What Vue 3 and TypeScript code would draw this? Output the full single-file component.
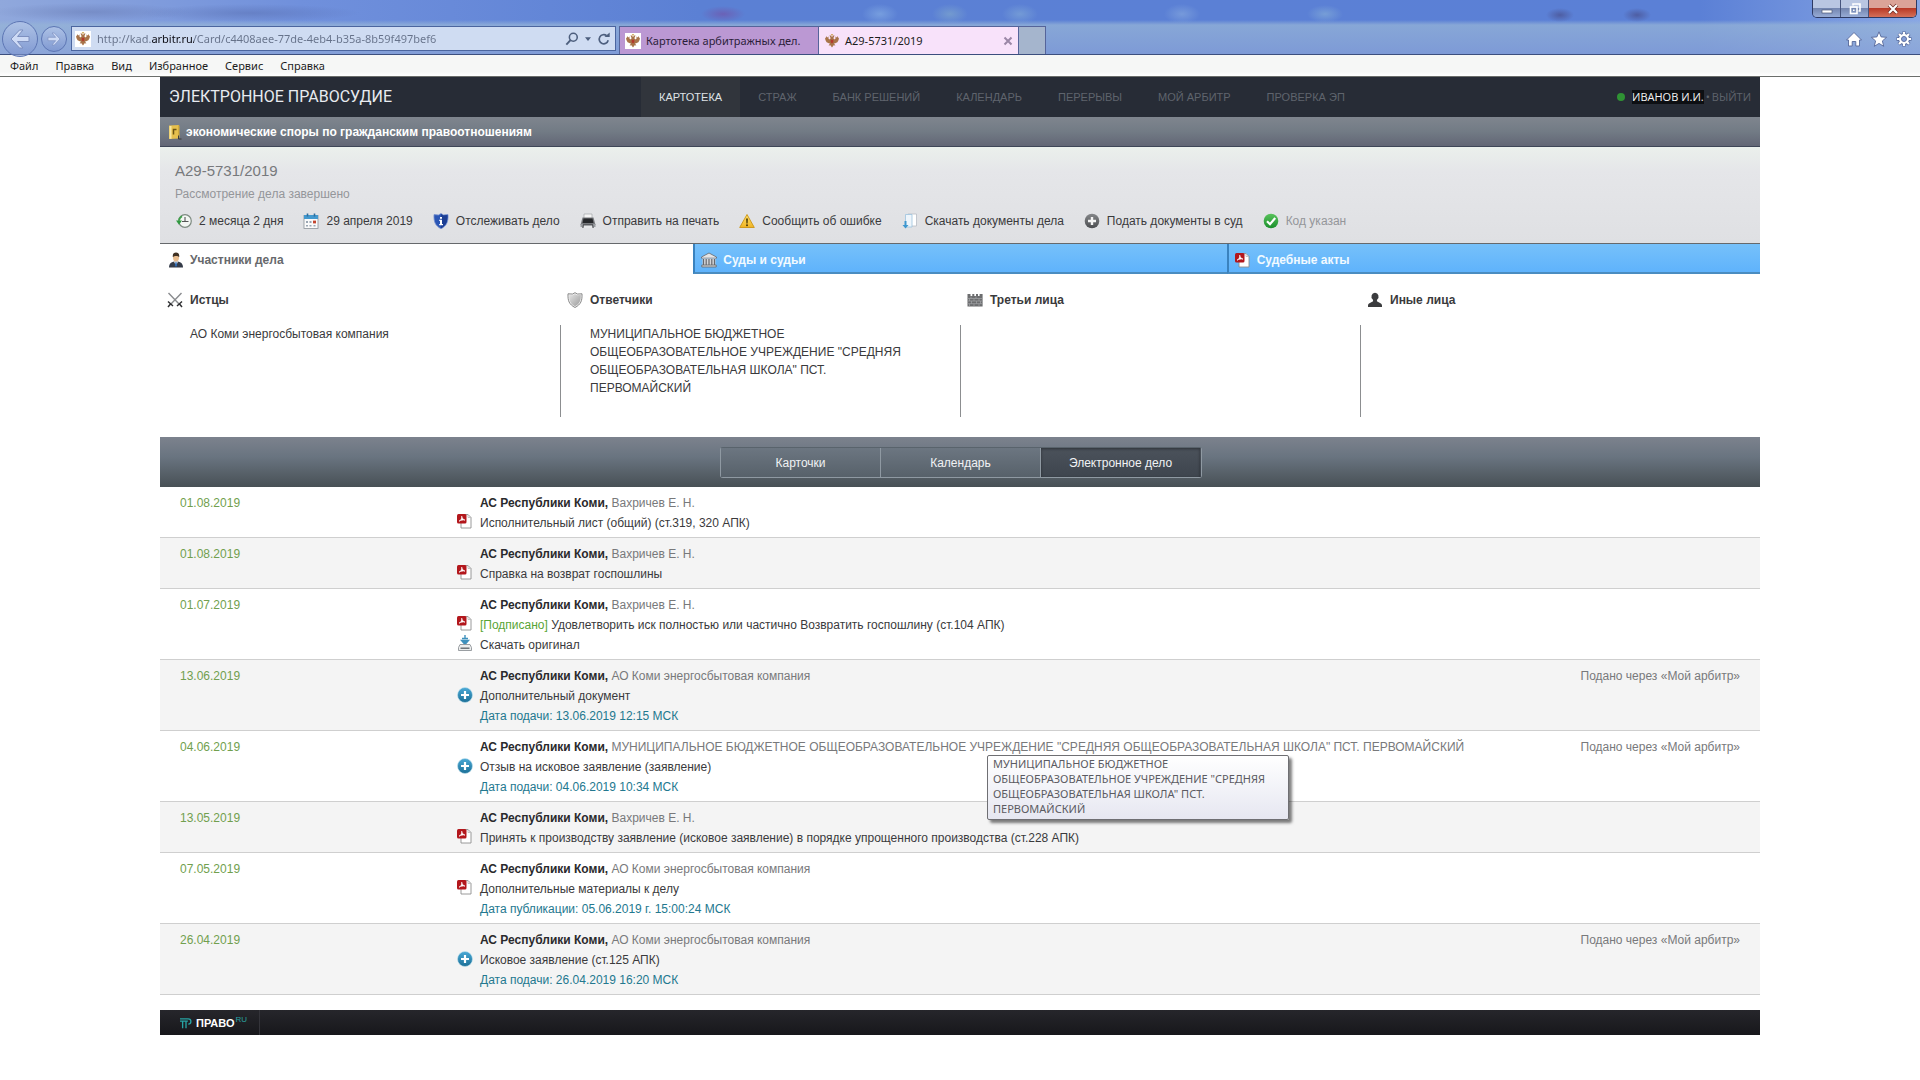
<script setup lang="ts">
import { ref } from 'vue'

interface Line {
  icon?: 'pdf' | 'save' | 'plus-blue'
  signed?: boolean
  text: string
  stamp?: boolean
}

interface Entry {
  date: string
  author: string
  lines: Line[]
  online?: boolean
  hint?: string
}

const school =
  'МУНИЦИПАЛЬНОЕ БЮДЖЕТНОЕ ОБЩЕОБРАЗОВАТЕЛЬНОЕ УЧРЕЖДЕНИЕ "СРЕДНЯЯ ОБЩЕОБРАЗОВАТЕЛЬНАЯ ШКОЛА" ПСТ. ПЕРВОМАЙСКИЙ'
const plaintiff = 'АО Коми энергосбытовая компания'
const judge = 'Вахричев Е. Н.'

const url = ref('http://kad.arbitr.ru/Card/c4408aee-77de-4eb4-b35a-8b59f497bef6')

const menu = ['Файл', 'Правка', 'Вид', 'Избранное', 'Сервис', 'Справка']
const sections = ['Картотека', 'Страж', 'Банк решений', 'Календарь', 'Перерывы', 'Мой арбитр', 'Проверка ЭП']

const actions = [
  { icon: 'clock', text: '2 месяца 2 дня' },
  { icon: 'calendar', text: '29 апреля 2019' },
  { icon: 'shield-info', text: 'Отслеживать дело' },
  { icon: 'printer', text: 'Отправить на печать' },
  { icon: 'warning', text: 'Сообщить об ошибке' },
  { icon: 'download-doc', text: 'Скачать документы дела' },
  { icon: 'plus-grey', text: 'Подать документы в суд' },
  { icon: 'check', text: 'Код указан', muted: true },
]

const caseTabs = [
  { icon: 'lawyer', text: 'Участники дела' },
  { icon: 'court', text: 'Суды и судьи' },
  { icon: 'pdf', text: 'Судебные акты' },
]
const activeTab = ref(0)

const parties = [
  { icon: 'swords', title: 'Истцы', names: [plaintiff] },
  { icon: 'shield-grey', title: 'Ответчики', names: [school] },
  { icon: 'wall', title: 'Третьи лица', names: [] as string[] },
  { icon: 'pawn', title: 'Иные лица', names: [] as string[] },
]

const views = ['Карточки', 'Календарь', 'Электронное дело']
const activeView = ref(2)

const entries: Entry[] = [
  { date: '01.08.2019', author: judge, lines: [{ icon: 'pdf', text: 'Исполнительный лист (общий) (ст.319, 320 АПК)' }] },
  { date: '01.08.2019', author: judge, lines: [{ icon: 'pdf', text: 'Справка на возврат госпошлины' }] },
  {
    date: '01.07.2019',
    author: judge,
    lines: [
      { icon: 'pdf', signed: true, text: 'Удовлетворить иск полностью или частично Возвратить госпошлину (ст.104 АПК)' },
      { icon: 'save', text: 'Скачать оригинал' },
    ],
  },
  {
    date: '13.06.2019',
    author: plaintiff,
    online: true,
    lines: [
      { icon: 'plus-blue', text: 'Дополнительный документ' },
      { text: 'Дата подачи: 13.06.2019 12:15 МСК', stamp: true },
    ],
  },
  {
    date: '04.06.2019',
    author: school,
    online: true,
    hint: school,
    lines: [
      { icon: 'plus-blue', text: 'Отзыв на исковое заявление (заявление)' },
      { text: 'Дата подачи: 04.06.2019 10:34 МСК', stamp: true },
    ],
  },
  {
    date: '13.05.2019',
    author: judge,
    lines: [
      { icon: 'pdf', text: 'Принять к производству заявление (исковое заявление) в порядке упрощенного производства (ст.228 АПК)' },
    ],
  },
  {
    date: '07.05.2019',
    author: plaintiff,
    lines: [
      { icon: 'pdf', text: 'Дополнительные материалы к делу' },
      { text: 'Дата публикации: 05.06.2019 г. 15:00:24 МСК', stamp: true },
    ],
  },
  {
    date: '26.04.2019',
    author: plaintiff,
    online: true,
    lines: [
      { icon: 'plus-blue', text: 'Исковое заявление (ст.125 АПК)' },
      { text: 'Дата подачи: 26.04.2019 16:20 МСК', stamp: true },
    ],
  },
]
</script>

<template>
  <svg class="sprite" aria-hidden="true">
    <defs>
      <linearGradient id="g-blue" x1="0" y1="0" x2="0" y2="1">
        <stop offset="0" stop-color="#4aa9d6" /><stop offset="1" stop-color="#1b6f97" />
      </linearGradient>
      <linearGradient id="g-grey" x1="0" y1="0" x2="0" y2="1">
        <stop offset="0" stop-color="#85878a" /><stop offset="1" stop-color="#4b4d50" />
      </linearGradient>
      <linearGradient id="g-green" x1="0" y1="0" x2="0" y2="1">
        <stop offset="0" stop-color="#59c35c" /><stop offset="1" stop-color="#1a8f2c" />
      </linearGradient>
      <linearGradient id="g-yellow" x1="0" y1="0" x2="0" y2="1">
        <stop offset="0" stop-color="#ffe36a" /><stop offset="1" stop-color="#f0b323" />
      </linearGradient>
      <linearGradient id="g-silver" x1="0" y1="0" x2="1" y2="1">
        <stop offset="0" stop-color="#e4e4e4" /><stop offset="1" stop-color="#9b9b9b" />
      </linearGradient>
    </defs>
    <symbol id="eagle" viewBox="0 0 16 16">
      <path d="M8 4 6.800 2.600 5.400 2.600 6.200 4 6.600 5.600 5.200 6.400 4.400 5.200 4.600 3.600 3.200 4.600 2.600 3 1.800 5 1 4.400 1.400 7 2.600 9.200 4.800 10.200 6 10.400 4.600 12.600 6.400 12.200 8 14.600 9.600 12.200 11.400 12.600 10 10.400 11.200 10.200 13.400 9.200 14.600 7 15 4.400 14.200 5 13.400 3 12.800 4.600 11.400 3.600 11.600 5.200 10.800 6.400 9.400 5.600 9.800 4 10.600 2.600 9.200 2.600Z" fill="#a8744a" />
      <path d="M6.800 1.200h2.400L8.700 2.600H7.300Z" fill="#c79a3d" />
      <path d="M6.700 6.800h2.600v2.400L8 10.600 6.700 9.200Z" fill="#b4382c" />
    </symbol>
    <symbol id="book" viewBox="0 0 16 16">
      <path d="M2 1.500 12 1v13.500L2 15Z" fill="#e6c04d" />
      <path d="M3.500 2v12.800" stroke="#f7e6a0" stroke-width="2" />
      <path d="M11 1l1.500.8v11.700l-1.500 1Z" fill="#d3ac3c" />
      <path d="M6.500 10.500V5.500h3" stroke="#6b5313" stroke-width="1.500" fill="none" />
      <path d="M11.500 11.500v3.500h3" stroke="#3a3a3a" stroke-width="1" fill="none" />
    </symbol>
    <symbol id="clock" viewBox="0 0 16 16">
      <circle cx="9" cy="8" r="6.300" fill="#f3f6f3" stroke="#7d8a80" stroke-width="1.200" />
      <path d="M9 4v4.500h3.500M9 8.500H6" stroke="#555" stroke-width="1.100" fill="none" />
      <path d="M6 3.200a6 6 0 0 0-3 4.300" stroke="#3fa24b" stroke-width="1.800" fill="none" />
      <path d="M0 7.500h6L3 11.800Z" fill="#2f9a3f" />
    </symbol>
    <symbol id="calendar" viewBox="0 0 16 16">
      <rect x="1" y="2.500" width="14" height="13" fill="#fafafa" stroke="#8b9299" stroke-width=".8" />
      <path d="M1 2h14v4H1Z" fill="#4399cf" />
      <path d="M4.500.5v3M11.500.5v3" stroke="#2e6f9e" stroke-width="1.600" />
      <path d="M3 8h2v2H3ZM6.500 8h2v2h-2ZM3 12h2v1.500H3ZM6.500 12h2v1.500h-2ZM10.500 12h2v1.500h-2Z" fill="#9aa6b3" />
      <path d="M10 7.600h3v2.800h-3Z" fill="#c5452f" />
    </symbol>
    <symbol id="shield-info" viewBox="0 0 16 16">
      <path d="M8 .5 10.500 2 15 1.600c.3 7-1 11-7 14.200C2 12.600.7 8.600 1 1.600L5.500 2Z" fill="#2b56b5" stroke="#7892cf" stroke-width=".8" />
      <path d="M8 .9v14.400C13.500 12.300 14.600 8.400 14.500 2L10.500 2.500Z" fill="#1d3f94" />
      <path d="M7 4h2v1.800H7ZM6.200 6.800H9V11h1v1.300H6.200V11H7V8h-.8Z" fill="#fff" />
    </symbol>
    <symbol id="printer" viewBox="0 0 16 16">
      <path d="M4 1h8v5H4Z" fill="#f5f5f5" stroke="#a4a6a9" stroke-width=".7" />
      <path d="M2.500 4.500h11L15.500 12H.5Z" fill="#77797d" />
      <path d="M3.500 5.500h9l1 4.500H2.500Z" fill="#26282b" />
      <path d="M.5 11h15v3H.5Z" fill="#9a9da1" />
      <path d="M3 11h10l.8 4H2.200Z" fill="#5a5c60" />
      <path d="M4 12.500h8l.5 2.500h-9Z" fill="#e6e7e9" />
    </symbol>
    <symbol id="warning" viewBox="0 0 16 16">
      <path d="M8 1.500 15.300 14.500H.7Z" fill="url(#g-yellow)" stroke="#cf9a1f" stroke-width="1" stroke-linejoin="round" />
      <path d="M7.100 5.500h1.800L8.600 10.500H7.400Z" fill="#4d3b08" /><circle cx="8" cy="12.300" r="1" fill="#4d3b08" />
    </symbol>
    <symbol id="download-doc" viewBox="0 0 16 16">
      <path d="M6 1h8.500v12H6Z" fill="#fff" stroke="#b8bdc4" stroke-width=".8" />
      <path d="M3.500 1.500h6.500V14h-6.500Z" fill="#eef5fb" stroke="#9cc3de" stroke-width=".8" />
      <path d="M2.500 8h2v4h2l-3 3.600L.5 12h2Z" fill="#3e97cf" />
    </symbol>
    <symbol id="plus-grey" viewBox="0 0 16 16">
      <circle cx="8" cy="8" r="7.300" fill="url(#g-grey)" />
      <path d="M8 4v8M4 8h8" stroke="#f4f4f4" stroke-width="2.400" />
    </symbol>
    <symbol id="plus-blue" viewBox="0 0 16 16">
      <circle cx="8" cy="8" r="7.500" fill="url(#g-blue)" stroke="#c3e2ef" stroke-width=".6" />
      <path d="M8 4v8M4 8h8" stroke="#fff" stroke-width="2.200" />
    </symbol>
    <symbol id="check" viewBox="0 0 16 16">
      <circle cx="8" cy="8" r="7.300" fill="url(#g-green)" />
      <path d="M4 8.300 7 11.200 12.200 5" stroke="#fff" stroke-width="2.200" fill="none" />
    </symbol>
    <symbol id="lawyer" viewBox="0 0 16 16">
      <path d="M1 15.500C1 11 4 9.500 8 9.500s7 1.500 7 6Z" fill="#343b48" />
      <path d="M6 9.500h4L8 14Z" fill="#fff" /><path d="M7.500 10h1l.7 3.500L8 15l-1.200-1.500Z" fill="#2c68b0" />
      <ellipse cx="8" cy="5.500" rx="3" ry="4" fill="#e9bd8f" />
      <path d="M4.800 5C4.500 1.500 6 .5 8 .5s3.500 1 3.200 4.500C10 3.500 6.500 3.500 4.800 5Z" fill="#403124" />
    </symbol>
    <symbol id="court" viewBox="0 0 16 16">
      <path d="M8 1 15.500 5v1.200H.5V5Z" fill="#e3e4e6" stroke="#65676b" stroke-width=".8" />
      <path d="M1.500 6.500h13v6.500h-13Z" fill="#d5d6d9" />
      <path d="M2.500 7v6M5.200 7v6M8 7v6M10.800 7v6M13.500 7v6" stroke="#66686d" stroke-width="1.200" />
      <path d="M.8 13h14.400v2H.8Z" fill="#d0d2d5" stroke="#65676b" stroke-width=".8" />
    </symbol>
    <symbol id="pdf" viewBox="0 0 16 16">
      <path d="M4 1.500h7l3 3V15H4Z" fill="#fff" stroke="#8f8f8f" stroke-width=".9" />
      <path d="M11 1.500v3h3" fill="none" stroke="#b9b9b9" stroke-width=".8" />
      <rect x="0" y="1" width="9.500" height="9.500" rx="1.500" fill="#b3171c" />
      <path d="M2 8.200C4 7.300 5 5.300 4.700 3.200c.4 2 1.700 3.600 3.300 3.900C6 6.700 4 7 2 8.200Z" fill="#fff" stroke="#fff" stroke-width=".7" />
    </symbol>
    <symbol id="save" viewBox="0 0 16 16">
      <path d="M8 0v4M5 3.500h6M4.500 5.500h7L8 9.500Z" stroke="#3f91bd" stroke-width="1.400" fill="#3f91bd" />
      <path d="M3 9.500h10l1.500 3v3h-13v-3Z" fill="#eceded" stroke="#909498" stroke-width=".9" />
      <path d="M3.500 13.200h9" stroke="#5a6066" stroke-width="1.300" />
    </symbol>
    <symbol id="swords" viewBox="0 0 16 16">
      <path d="M1.500 1 12.500 12.500M14.500 1 3.500 12.500" stroke="#8a8c8f" stroke-width="1.400" />
      <path d="M1 9.500 6 14M15 9.500 10 14M3.500 12 1 15M12.500 12 15 15" stroke="#2f3033" stroke-width="1.500" fill="none" />
    </symbol>
    <symbol id="shield-grey" viewBox="0 0 16 16">
      <path d="M8 .7 10.500 2 15 1.800c.3 6.800-1 10.600-7 13.700C2 12.400.7 8.600 1 1.800L5.500 2Z" fill="#f0f0f0" stroke="#7e7e7e" stroke-width=".9" />
      <path d="M8 2 10.300 3.200 13.800 3c.1 5.400-1 8.600-5.800 11.300C3.200 11.600 2.100 8.400 2.200 3L5.700 3.200Z" fill="url(#g-silver)" />
    </symbol>
    <symbol id="wall" viewBox="0 0 16 16">
      <path d="M.5 2h3v2h1.800V2h2v2H9V2h2v2h1.600V2h3v12.500H.5Z" fill="#6c6d6f" />
      <path d="M.5 6.500h15M.5 9h15M.5 11.700h15M4 4.500v2M9 4.500v2M2.500 6.500V9M7 6.500V9M12 6.500V9M4.500 9v2.700M9.500 9v2.700M13.500 9v2.700M2.500 11.700v2.800M7 11.700v2.800M12 11.700v2.800" stroke="#a4a5a7" stroke-width=".7" />
    </symbol>
    <symbol id="pawn" viewBox="0 0 16 16">
      <path d="M8 .7a3.500 3.800 0 0 1 2.200 6.800L9.800 9c.6 1.400 5.200 1.500 5.200 4.500V15H1v-1.500C1 10.500 5.600 10.400 6.200 9L5.800 7.500A3.500 3.800 0 0 1 8 .7Z" fill="#3b3c3e" />
    </symbol>
    <symbol id="home" viewBox="0 0 16 16">
      <path d="M8 1.500 15.500 9h-2v6H9.800v-4.500H6.200V15H2.500V9h-2Z" fill="#fff" stroke="#56689a" stroke-width=".9" />
    </symbol>
    <symbol id="star" viewBox="0 0 16 16">
      <path d="M8 .8 10.100 5.900 15.600 6.300 11.400 9.900 12.700 15.300 8 12.400 3.300 15.300 4.600 9.900.4 6.300 5.900 5.900Z" fill="#fff" stroke="#56689a" stroke-width=".9" />
    </symbol>
    <symbol id="gear" viewBox="0 0 16 16">
      <path d="M8 .5v15M.5 8h15M2.700 2.700l10.600 10.600M13.300 2.700 2.700 13.300" stroke="#56689a" stroke-width="3.400" />
      <circle cx="8" cy="8" r="6" fill="#56689a" />
      <path d="M8 1v14M1 8h14M3 3l10 10M13 3 3 13" stroke="#fff" stroke-width="2.200" />
      <circle cx="8" cy="8" r="5" fill="#fff" /><circle cx="8" cy="8" r="2.500" fill="#86a0d8" stroke="#56689a" stroke-width=".9" />
    </symbol>
    <symbol id="magnifier" viewBox="0 0 16 16">
      <circle cx="9.500" cy="6" r="4.500" fill="none" stroke="#4d5f7e" stroke-width="1.800" />
      <path d="M6.300 9.300 1.500 14.500" stroke="#4d5f7e" stroke-width="2.200" />
    </symbol>
    <symbol id="reload" viewBox="0 0 16 16">
      <path d="M12.800 9.500A5.200 5.200 0 1 1 11 4.200" fill="none" stroke="#4d5f7e" stroke-width="1.900" />
      <path d="M8.500 5.800h6V.5Z" fill="#4d5f7e" />
    </symbol>
    <symbol id="pravo" viewBox="0 0 16 16">
      <path d="M0 2.500h11a3.500 3.500 0 0 1 0 7M0 5.500h10.500M3.500 5v10M8 5v10" stroke="#27a3a3" stroke-width="1.800" fill="none" />
    </symbol>
  </svg>

  <header class="chrome">
    <div class="caption">
      <div class="window-buttons">
        <button type="button" class="wb" aria-label="Свернуть">
          <svg width="12" height="12" viewBox="0 0 12 12"><rect x="1" y="7" width="10" height="3" fill="#fff" stroke="#4c5878" stroke-width=".7" /></svg>
        </button>
        <button type="button" class="wb" aria-label="Развернуть">
          <svg width="12" height="12" viewBox="0 0 12 12" fill="none" stroke="#fff" stroke-width="1.600"><path d="M4 2.500V1h7v7H9.500" /><rect x="1.500" y="4" width="6.500" height="6.500" /><path d="M4 7.200h1.600" /></svg>
        </button>
        <button type="button" class="wb wb-close" aria-label="Закрыть">
          <svg width="12" height="12" viewBox="0 0 12 12"><path d="M2 2l8 8M10 2 2 10" stroke="#6e2a20" stroke-width="3.600" /><path d="M2 2l8 8M10 2 2 10" stroke="#fff" stroke-width="2.200" /></svg>
        </button>
      </div>
    </div>
    <div class="browser-bar">
      <button type="button" class="round back" aria-label="Назад">
        <svg width="24" height="24" viewBox="0 0 24 24"><path d="M11.500 3 3 12l8.500 9h3.500L9.500 14.500H21v-5H9.500L15 3Z" fill="#cddaf5" stroke="#7d90c0" /></svg>
      </button>
      <button type="button" class="round forward" aria-label="Вперед">
        <svg width="16" height="16" viewBox="0 0 24 24"><path d="M12.500 3 21 12l-8.500 9H9l5.500-6.500H3v-5h11.500L9 3Z" fill="#cddaf5" stroke="#7d90c0" /></svg>
      </button>
      <form class="address" @submit.prevent>
        <span class="favicon"><svg width="16" height="16"><use href="#eagle" /></svg></span>
        <input v-model="url" class="url" type="text" aria-label="Адрес" spellcheck="false" />
        <button type="button" class="bare" aria-label="Поиск"><svg width="14" height="14"><use href="#magnifier" /></svg></button>
        <button type="button" class="bare" aria-label="Журнал"><svg width="6" height="4" viewBox="0 0 8 5"><path d="M0 0h8L4 5Z" fill="#4d5f7e" /></svg></button>
        <button type="submit" class="bare" aria-label="Обновить"><svg width="14" height="14"><use href="#reload" /></svg></button>
      </form>
      <div class="page-tabs">
        <button type="button" class="page-tab">
          <span class="favicon"><svg width="16" height="16"><use href="#eagle" /></svg></span>
          <span class="page-tab-title">Картотека арбитражных дел.</span>
        </button>
        <div class="page-tab current">
          <span class="favicon"><svg width="16" height="16"><use href="#eagle" /></svg></span>
          <span class="page-tab-title">А29-5731/2019</span>
          <button type="button" class="bare" aria-label="Закрыть вкладку">
            <svg width="10" height="10" viewBox="0 0 10 10"><path d="M1.500 1.500l7 7M8.500 1.500l-7 7" stroke="#9b87a6" stroke-width="2" /></svg>
          </button>
        </div>
        <button type="button" class="new-tab" aria-label="Новая вкладка"></button>
      </div>
      <div class="browser-tools">
        <button type="button" class="bare" aria-label="Домой"><svg width="16" height="16"><use href="#home" /></svg></button>
        <button type="button" class="bare" aria-label="Избранное"><svg width="16" height="16"><use href="#star" /></svg></button>
        <button type="button" class="bare" aria-label="Сервис"><svg width="16" height="16"><use href="#gear" /></svg></button>
      </div>
    </div>
    <div class="menu">
      <button v-for="item in menu" :key="item" type="button" class="bare">{{ item }}</button>
    </div>
  </header>

  <div class="page">
    <div class="top">
      <a href="#" class="brand">ЭЛЕКТРОННОЕ ПРАВОСУДИЕ</a>
      <nav class="sections">
        <a v-for="(s, i) in sections" :key="s" href="#" :class="{ current: i === 0 }">{{ s }}</a>
      </nav>
      <div class="user">
        <span class="online-dot"></span>
        <a href="#" class="user-name">ИВАНОВ И.И.</a>
        <span>•</span>
        <a href="#">ВЫЙТИ</a>
      </div>
    </div>

    <div class="category">
      <svg width="16" height="16"><use href="#book" /></svg>
      <span>экономические споры по гражданским правоотношениям</span>
    </div>

    <section class="case">
      <h1>А29-5731/2019</h1>
      <p class="status">Рассмотрение дела завершено</p>
      <ul class="actions">
        <li v-for="a in actions" :key="a.text">
          <a href="#" :class="{ muted: a.muted }">
            <svg width="16" height="16"><use :href="'#' + a.icon" /></svg>{{ a.text }}
          </a>
        </li>
      </ul>
    </section>

    <div class="case-tabs">
      <button
        v-for="(t, i) in caseTabs"
        :key="t.text"
        type="button"
        :class="{ open: i === activeTab }"
        @click="activeTab = i"
      >
        <svg width="16" height="16"><use :href="'#' + t.icon" /></svg>{{ t.text }}
      </button>
    </div>

    <div class="parties">
      <section v-for="p in parties" :key="p.title" class="party">
        <h2><svg width="16" height="16"><use :href="'#' + p.icon" /></svg>{{ p.title }}</h2>
        <div class="party-list">
          <a v-for="n in p.names" :key="n" href="#">{{ n }}</a>
        </div>
      </section>
    </div>

    <div class="view-bar">
      <div class="view-switch">
        <button
          v-for="(v, i) in views"
          :key="v"
          type="button"
          :class="{ pressed: i === activeView }"
          @click="activeView = i"
        >{{ v }}</button>
      </div>
    </div>

    <ul class="entries">
      <li v-for="(e, i) in entries" :key="i" class="entry">
        <time class="date">{{ e.date }}</time>
        <div class="body">
          <p class="line"><span class="mark"></span><span><b>АС Республики Коми,</b> <span class="author">{{ e.author }}</span></span></p>
          <p v-for="l in e.lines" :key="l.text" class="line" :class="{ stamp: l.stamp }">
            <span class="mark"><svg v-if="l.icon" :class="{ round: l.icon === 'plus-blue' }" width="16" height="16"><use :href="'#' + l.icon" /></svg></span>
            <span v-if="l.stamp">{{ l.text }}</span>
            <a v-else href="#"><span v-if="l.signed" class="signed">[Подписано] </span>{{ l.text }}</a>
          </p>
          <div v-if="e.hint" class="hint" role="tooltip">{{ e.hint }}</div>
        </div>
        <span v-if="e.online" class="source">Подано через «Мой арбитр»</span>
      </li>
    </ul>

    <footer class="footer">
      <a href="#" class="pravo">
        <svg width="12" height="12"><use href="#pravo" /></svg><b>ПРАВО</b><sup>RU</sup>
      </a>
    </footer>
  </div>
</template>

<style>
body {
  margin: 0;
  background: #fff;
}
</style>

<style scoped>
* {
  box-sizing: border-box;
}
.sprite {
  position: absolute;
  width: 0;
  height: 0;
}
svg {
  display: block;
  flex: none;
}
a {
  color: inherit;
  text-decoration: none;
}
button {
  font: inherit;
  color: inherit;
  cursor: pointer;
}
.bare {
  padding: 0;
  border: 0;
  background: none;
}

/* browser frame */
.chrome {
  font: 11px/16px 'Noto Sans', sans-serif;
  color: #1c1c1c;
  background:
    radial-gradient(ellipse 100px 9px at 90px 12px, rgba(90, 105, 160, 0.35), transparent),
    radial-gradient(ellipse 110px 9px at 250px 13px, rgba(80, 100, 165, 0.4), transparent),
    radial-gradient(ellipse 22px 8px at 723px 14px, rgba(110, 90, 175, 0.8), transparent),
    radial-gradient(ellipse 18px 10px at 880px 14px, rgba(125, 165, 225, 0.8), transparent),
    radial-gradient(ellipse 18px 10px at 950px 14px, rgba(125, 165, 205, 0.7), transparent),
    radial-gradient(ellipse 18px 10px at 1020px 14px, rgba(125, 165, 215, 0.7), transparent),
    radial-gradient(ellipse 18px 10px at 1182px 14px, rgba(125, 160, 220, 0.8), transparent),
    radial-gradient(ellipse 18px 9px at 1325px 14px, rgba(125, 165, 215, 0.8), transparent),
    radial-gradient(ellipse 14px 7px at 1560px 15px, rgba(75, 85, 150, 0.8), transparent),
    radial-gradient(ellipse 14px 7px at 1637px 15px, rgba(75, 85, 150, 0.8), transparent),
    linear-gradient(to bottom, transparent 20px, rgba(150, 180, 215, 0.75) 25px, rgba(140, 165, 215, 0.7) 54px),
    linear-gradient(to right, #90a8dc, #7090dc 300px, #5b80d4 700px, #5b80d6 1700px, #88a6e4);
}
.caption {
  display: flex;
  justify-content: flex-end;
  height: 23px;
  padding-right: 3px;
}
.window-buttons {
  display: flex;
  height: 18px;
  border: 1px solid #2e3a63;
  border-top: 0;
  border-radius: 0 0 5px 5px;
  overflow: hidden;
}
.wb {
  display: flex;
  align-items: center;
  justify-content: center;
  width: 28px;
  padding: 0;
  border: 0;
  border-right: 1px solid #46547d;
  background: linear-gradient(#b9c6e2 45%, #7486b0 50%, #97abd6);
}
.wb-close {
  width: 47px;
  border-right: 0;
  background: linear-gradient(#dba397 45%, #b93a26 50%, #d5705a);
}
.browser-bar {
  display: flex;
  align-items: center;
  height: 32px;
  border-bottom: 1px solid #3c4f7e;
}
.round {
  flex: none;
}
.back,
.forward {
  display: flex;
  align-items: center;
  justify-content: center;
  padding: 0;
  border: 1px solid #5d76b4;
  border-radius: 50%;
  background: linear-gradient(rgba(190, 205, 238, 0.6), rgba(120, 145, 205, 0.6));
}
.back {
  width: 36px;
  height: 36px;
  margin-left: 2px;
}
.forward {
  width: 26px;
  height: 26px;
  margin: 0 4px 0 3px;
}
.address {
  display: flex;
  align-items: center;
  gap: 6px;
  flex: none;
  width: 545px;
  height: 25px;
  padding: 0 4px 0 3px;
  border: 1px solid #4b659f;
  background: #cfdcf2;
}
.favicon {
  flex: none;
  background: #fff;
}
.url {
  flex: 1;
  height: 20px;
  padding: 0;
  border: 0;
  outline: 0;
  font: inherit;
  color: transparent;
  background: linear-gradient(to right, #66728a 54px, #0a0a12 54px 97px, #66728a 97px);
  -webkit-background-clip: text;
  background-clip: text;
}
.page-tabs {
  display: flex;
  align-self: flex-end;
  height: 28px;
  margin-left: 3px;
}
.page-tab {
  display: flex;
  align-items: center;
  gap: 5px;
  width: 200px;
  padding: 0 5px;
  border: 1px solid #55649a;
  border-bottom: 0;
  background: #bb98d3;
  color: #2b1e3a;
  text-align: left;
}
.page-tab.current {
  border-left: 0;
  background: #f8e2fa;
  color: #1c1c1c;
}
.page-tab.current .favicon {
  background: none;
}
.page-tab-title {
  flex: 1;
  white-space: nowrap;
}
.new-tab {
  width: 27px;
  padding: 0;
  border: 1px solid #55649a;
  border-width: 1px 1px 0 0;
  background: #a5b5cd;
}
.browser-tools {
  display: flex;
  gap: 9px;
  margin-left: auto;
  padding-right: 8px;
}
.menu {
  display: flex;
  gap: 17px;
  height: 22px;
  padding-left: 10px;
  border-bottom: 1px solid #6b6e6b;
  background: linear-gradient(#f6f7f6 80%, #fff);
}

/* site */
.page {
  padding: 0 160px 45px;
  font: 12px/20px 'Liberation Sans', Arial, sans-serif;
  color: #3a3a3c;
}
.top {
  display: flex;
  height: 40px;
  background: #272c36;
}
.brand {
  flex: none;
  width: 481px;
  padding-left: 9px;
  font: 16px/40px Roboto, sans-serif;
  color: #e8ebf0;
}
.sections {
  display: flex;
  font-size: 11px;
  line-height: 40px;
  color: #5f646d;
  text-transform: uppercase;
}
.sections a {
  padding: 0 18px;
}
.sections .current {
  background: #31353c;
  color: #dfe2e6;
}
.user {
  display: flex;
  align-items: center;
  gap: 2px;
  margin-left: auto;
  padding-right: 9px;
  font-family: 'Open Sans', sans-serif;
  font-size: 11px;
  color: #5f646d;
}
.online-dot {
  width: 8px;
  height: 8px;
  margin-right: 5px;
  border-radius: 50%;
  background: #2f9334;
}
.user-name {
  background: #0d0f13;
  line-height: 14px;
  color: #f4f4f4;
}
.category {
  display: flex;
  align-items: center;
  gap: 3px;
  height: 30px;
  padding-left: 7px;
  border-bottom: 1px solid #3e4657;
  background: linear-gradient(#7f858e, #727b85 50%, #626675);
  font-weight: bold;
  color: #fff;
}
.case {
  padding: 13px 15px 12px;
  height: 97px;
  border-bottom: 1px solid #66696c;
  background: linear-gradient(#ebf0ec, #e5e6e9 25%, #dfe0e3);
}
h1 {
  margin: 0;
  font-size: 15px;
  font-weight: normal;
  line-height: 22px;
  color: #77797c;
}
.status {
  margin: 2px 0 7px;
  line-height: 20px;
  color: #94969a;
}
.actions {
  display: flex;
  gap: 20px;
  margin: 0;
  padding: 0 0 0 1px;
  list-style: none;
  white-space: nowrap;
}
.actions a {
  display: flex;
  align-items: center;
  gap: 7px;
}
.actions .muted {
  color: #94969a;
}
.case-tabs {
  display: flex;
  height: 30px;
}
.case-tabs button {
  display: flex;
  align-items: center;
  flex: 1;
  gap: 6px;
  padding: 3px 6px 0;
  border: 0;
  border-left: 2px solid #3a82be;
  border-bottom: 2px solid #4a8cc0;
  background: linear-gradient(#76c1fa, #5fb3fc);
  font-weight: bold;
  color: #f2faff;
}
.case-tabs .open {
  border-color: transparent;
  background: #fff;
  color: #67696c;
}
.parties {
  display: flex;
  padding: 16px 0 20px;
}
.party {
  flex: 1;
}
h2 {
  display: flex;
  align-items: center;
  gap: 7px;
  margin: 0 0 15px;
  padding-left: 7px;
  font-size: 12px;
  line-height: 20px;
}
.party-list {
  min-height: 92px;
  padding: 0 36px 0 29px;
  border-left: 1px solid #8c8e90;
  line-height: 18px;
}
.party:first-child .party-list {
  border-color: transparent;
}
.view-bar {
  display: flex;
  justify-content: center;
  height: 50px;
  padding: 10px 0 9px 2px;
  background: linear-gradient(#7c828d, #697480 40%, #485055);
}
.view-switch {
  display: flex;
  width: 482px;
  border: 1px solid #8f99a2;
  border-top-color: #59636c;
  border-radius: 3px;
}
.view-switch button {
  flex: 1;
  padding: 0;
  border: 0;
  border-right: 1px solid #8f99a2;
  background: linear-gradient(#6c7681, #57616a);
  color: #f0f2f4;
}
.view-switch .pressed {
  border-right-color: transparent;
  background: linear-gradient(#4b525b, #3e454e);
  box-shadow: inset 0 1px 3px rgba(0, 0, 0, 0.4);
}
.entries {
  margin: 0;
  padding: 0;
  list-style: none;
}
.entry {
  display: flex;
  padding: 6px 20px 4px;
  border-bottom: 1px solid #cfcfcf;
}
.entry:nth-child(even) {
  background: #f4f4f4;
}
.date {
  flex: none;
  width: 277px;
  color: #719f4e;
}
.body {
  position: relative;
  flex: 1;
}
.line {
  display: flex;
  margin: 0;
}
.line b {
  color: #2a2a2c;
}
.mark {
  flex: none;
  width: 23px;
}
.mark .round {
  margin-top: 1px;
}
.author,
.source {
  color: #78797b;
}
.signed {
  color: #58a435;
}
.stamp {
  color: #23788f;
}
.source {
  white-space: nowrap;
}
.hint {
  position: absolute;
  top: 18px;
  left: 530px;
  width: 302px;
  padding: 0 5px 3px;
  border: 1px solid #6f6f73;
  border-radius: 2px;
  background: linear-gradient(#fff, #e6e7f1);
  box-shadow: 3px 3px 3px rgba(0, 0, 0, 0.5);
  font-family: 'Noto Sans', sans-serif;
  font-size: 11px;
  line-height: 15px;
  color: #5b5b62;
}
.footer {
  display: flex;
  height: 25px;
  margin-top: 15px;
  background: linear-gradient(#26262b, #17171b);
}
.pravo {
  display: flex;
  align-items: center;
  gap: 4px;
  width: 100px;
  padding-left: 20px;
  border-right: 1px solid #34343a;
  font-size: 11px;
  color: #fff;
}
.pravo sup {
  align-self: flex-start;
  margin-left: -3px;
  font-size: 8px;
  line-height: 20px;
  color: #2aa0a0;
}
</style>
